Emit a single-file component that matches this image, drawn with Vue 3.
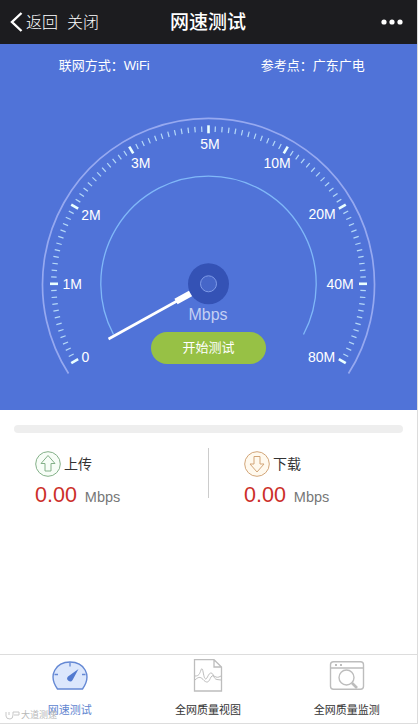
<template>
  <div class="page">
    <header class="navbar">
      <div class="nav-left">
        <svg class="back-icon" width="13" height="20" viewBox="0 0 13 20">
          <path d="M11.5 1 L2 10 L11.5 19" fill="none" stroke="#fff" stroke-width="2.4" />
        </svg>
        <span>返回</span>
        <span class="close">关闭</span>
      </div>
      <h1>网速测试</h1>
      <svg class="more" width="22" height="6" viewBox="0 0 22 6" fill="#fff">
        <circle cx="3" cy="3" r="2.6" />
        <circle cx="11" cy="3" r="2.6" />
        <circle cx="19" cy="3" r="2.6" />
      </svg>
    </header>

    <section class="panel">
      <div class="info">
        <span>联网方式：WiFi</span>
        <span>参考点：广东广电</span>
      </div>
      <div class="dial">
        <svg width="351" height="280" viewBox="33 105 351 280">
          <path class="outer" d="M68.5 373.5 A166 166 0 1 1 348.5 373.5" />
          <path class="inner" d="M113.5 334.5 A107.7 107.7 0 1 1 303.5 334.5" />
          <line
            v-for="t in ticks"
            :key="t.angle"
            :class="t.major ? 'major' : 'minor'"
            :x1="t.x1"
            :y1="t.y1"
            :x2="t.x2"
            :y2="t.y2"
          />
          <text v-for="l in labels" :key="l.text" class="label" :x="l.x" :y="l.y">{{ l.text }}</text>
          <circle cx="208.5" cy="283.8" r="20.5" fill="#3452b5" />
          <circle cx="208.5" cy="283.8" r="8" fill="#4666c8" stroke="#7f9be8" stroke-width="1" />
          <path d="M108.5 339 L178 300.5" stroke="#fff" stroke-width="2.6" />
          <path d="M176 301.5 L190.5 293.5" stroke="#fff" stroke-width="6.5" />
          <text class="unit" x="208" y="319.5">Mbps</text>
        </svg>
        <button class="start">开始测试</button>
      </div>
    </section>

    <div class="progress"></div>

    <section class="results">
      <div class="result">
        <div class="result-title">
          <svg width="26" height="26" viewBox="0 0 26 26" fill="#f7fdf7" stroke="#83b088">
            <circle cx="13" cy="13" r="12.3" />
            <path d="M13 4.5 L20 12.5 H16 V20 H10 V12.5 H6 Z" />
          </svg>
          <span>上传</span>
        </div>
        <div class="value"><b>0.00</b><span>Mbps</span></div>
      </div>
      <div class="divider"></div>
      <div class="result">
        <div class="result-title">
          <svg width="26" height="26" viewBox="0 0 26 26" fill="#fff9ee" stroke="#d2a578">
            <circle cx="13" cy="13" r="12.3" />
            <path d="M13 21 L20 13 H16 V5.5 H10 V13 H6 Z" />
          </svg>
          <span>下载</span>
        </div>
        <div class="value"><b>0.00</b><span>Mbps</span></div>
      </div>
    </section>

    <nav class="tabs">
      <div class="tab active">
        <svg width="38" height="34" viewBox="-2 0 38 34">
          <path
            d="M5.5 30 C-4.5 16 4 3 18 3 C32 3 40.5 16 30.5 30 Z"
            fill="#dce7fc" stroke="#6488d4" stroke-width="1.4" stroke-linejoin="round"
          />
          <path d="M18 3.5 V7.5 M2.5 15.5 H6 M30 15.5 H33.5" stroke="#6488d4" stroke-width="1.3" />
          <path d="M26.5 10 L20.6 21 A2.9 2.9 0 1 1 16 17.5 Z" fill="#527ad0" />
        </svg>
        <span>网速测试</span>
      </div>
      <div class="tab">
        <svg width="36" height="34" viewBox="0 0 36 34" fill="none" stroke="#bdbdbd">
          <path d="M4.5 .7 H24 L31.5 8 V32 H4.5 Z M24 .7 V8 H31.5" stroke-width="1.3" />
          <path d="M5 17 C9 17 9.5 15 11 11 C13 6 13 17 15 19.5 C17 22 18 14 21 14 C24 14 23 20 27 20.5 L31 21" />
          <path d="M5 21 C9 17 11 18 14 21.5 C18 25 19 22 21 18 C24 14 25 21 31 17" />
        </svg>
        <span>全网质量视图</span>
      </div>
      <div class="tab">
        <svg width="36" height="34" viewBox="0 0 36 34" fill="none" stroke="#bdbdbd" stroke-width="1.4">
          <rect x="1.5" y="2.7" width="33" height="27.5" rx="3" />
          <path d="M1.5 9 H34.5" />
          <path d="M6 6 H8 M11 6 H13" stroke-width="1.8" />
          <circle cx="17.5" cy="18.5" r="7.5" />
          <path d="M23 24 L28 29" stroke-width="2.6" />
        </svg>
        <span>全网质量监测</span>
      </div>
      <div class="watermark">
        <svg width="16" height="11" viewBox="0 0 16 11" fill="none" stroke="#c8c8c8">
          <path d="M1 2 V6 Q1 9 5 9 Q8 9 8 5 V2 H14 V5 H9 M4 2 V5" />
        </svg>
        <span>大道测速</span>
      </div>
    </nav>
  </div>
</template>

<script setup>
const cx = 208.5
const cy = 283.8

// one tick every 2.5 degrees, a major one every 30
const ticks = []
for (let i = 0; i <= 96; i++) {
  const angle = 150 + i * 2.5
  const rad = (angle * Math.PI) / 180
  const major = i % 12 === 0
  const r1 = major ? 150.5 : 152
  const r2 = major ? 158.5 : 157.5
  ticks.push({
    angle,
    major,
    x1: cx + r1 * Math.cos(rad),
    y1: cy + r1 * Math.sin(rad),
    x2: cx + r2 * Math.cos(rad),
    y2: cy + r2 * Math.sin(rad)
  })
}

const labels = [
  { text: '0', x: 85.5, y: 361.5 },
  { text: '1M', x: 72.3, y: 289 },
  { text: '2M', x: 91, y: 219.5 },
  { text: '3M', x: 140.7, y: 168 },
  { text: '5M', x: 210, y: 148.5 },
  { text: '10M', x: 277, y: 168 },
  { text: '20M', x: 322, y: 218.5 },
  { text: '40M', x: 340, y: 289 },
  { text: '80M', x: 321.5, y: 361.5 }
]
</script>

<style>
body {
  background: #fff;
}
</style>

<style scoped>
.page {
  box-sizing: border-box;
  height: 724px;
  display: flex;
  flex-direction: column;
  background: #fff;
  border-right: 1px solid #dcdcdc;
  font-family: "Liberation Sans", "Noto Sans CJK SC", sans-serif;
  overflow: hidden;
}

.navbar {
  height: 44px;
  flex: none;
  display: grid;
  grid-template-columns: 1fr auto 1fr;
  align-items: center;
  padding: 0 14px 0 10px;
  background: #1c1c1f;
  color: #fff;
}

.nav-left {
  display: flex;
  align-items: center;
  font-size: 16px;
  font-weight: 300;
}

.nav-left span {
  padding-bottom: 2px;
}

.back-icon {
  margin-right: 3px;
}

.close {
  margin-left: 9px;
}

h1 {
  margin: 0;
  padding: 0 0 4px 3px;
  font-size: 19px;
  font-weight: 500;
}

.more {
  justify-self: end;
}

.panel {
  height: 366px;
  flex: none;
  background: #5073d8;
  color: #fff;
}

.info {
  box-sizing: border-box;
  height: 46px;
  display: grid;
  grid-template-columns: 1fr 1fr;
  align-items: center;
  padding-bottom: 5px;
  text-align: center;
  font-size: 13px;
}

.dial {
  display: flex;
  flex-direction: column;
  align-items: center;
  padding-top: 15px;
}

.dial svg {
  flex: none;
}

.outer {
  fill: none;
  stroke: #96a9f0;
  stroke-width: 1.7;
}

.inner {
  fill: none;
  stroke: #80b8f8;
  stroke-width: 1.3;
}

.major {
  stroke: #eaffff;
  stroke-width: 2.6;
}

.minor {
  stroke: #b5d9f8;
  stroke-width: 1.2;
}

.label {
  fill: #fff;
  font-size: 14px;
  text-anchor: middle;
}

.unit {
  fill: #c3cff3;
  font-size: 16px;
  text-anchor: middle;
}

.start {
  width: 115px;
  height: 32px;
  margin-top: -53px;
  padding: 0 0 3px;
  border: 0;
  border-radius: 16px;
  background: #97c145;
  color: #fff;
  font-family: inherit;
  font-size: 13px;
}

.progress {
  height: 8px;
  flex: none;
  margin: 15px 14px 0;
  border-radius: 4px;
  background: #eee;
}

.results {
  display: flex;
  padding: 15px 0 0 35px;
}

.result {
  width: 173px;
}

.result-title {
  height: 26px;
  display: flex;
  align-items: center;
  gap: 3px;
  margin-top: 3px;
  font-size: 14px;
  color: #333;
}

.result-title span {
  padding-bottom: 3px;
}

.value {
  display: flex;
  align-items: baseline;
  gap: 8px;
  margin-top: 5px;
}

.value b {
  font-size: 21.5px;
  line-height: 26px;
  font-weight: 400;
  color: #cc2f2a;
}

.value span {
  font-size: 14.5px;
  color: #777;
}

.divider {
  width: 1px;
  height: 50px;
  margin-right: 35px;
  background: #ccc;
}

.tabs {
  height: 70px;
  position: relative;
  display: grid;
  grid-template-columns: repeat(3, 1fr);
  margin-top: auto;
  padding-right: 1px;
  border-top: 1px solid #ddd;
  border-bottom: 1px solid #ddd;
  box-sizing: border-box;
}

.tab {
  display: flex;
  flex-direction: column;
  align-items: center;
  padding-top: 4px;
  font-size: 11px;
  line-height: 16px;
  color: #333;
}

.tab span {
  margin-top: 9px;
}

.active {
  color: #6085d0;
}

.active span {
  padding-left: 1px;
}

.watermark {
  position: absolute;
  left: 5px;
  bottom: 2px;
  display: flex;
  align-items: center;
  font-size: 9px;
  line-height: 12px;
  color: #b8b8b8;
}
</style>
